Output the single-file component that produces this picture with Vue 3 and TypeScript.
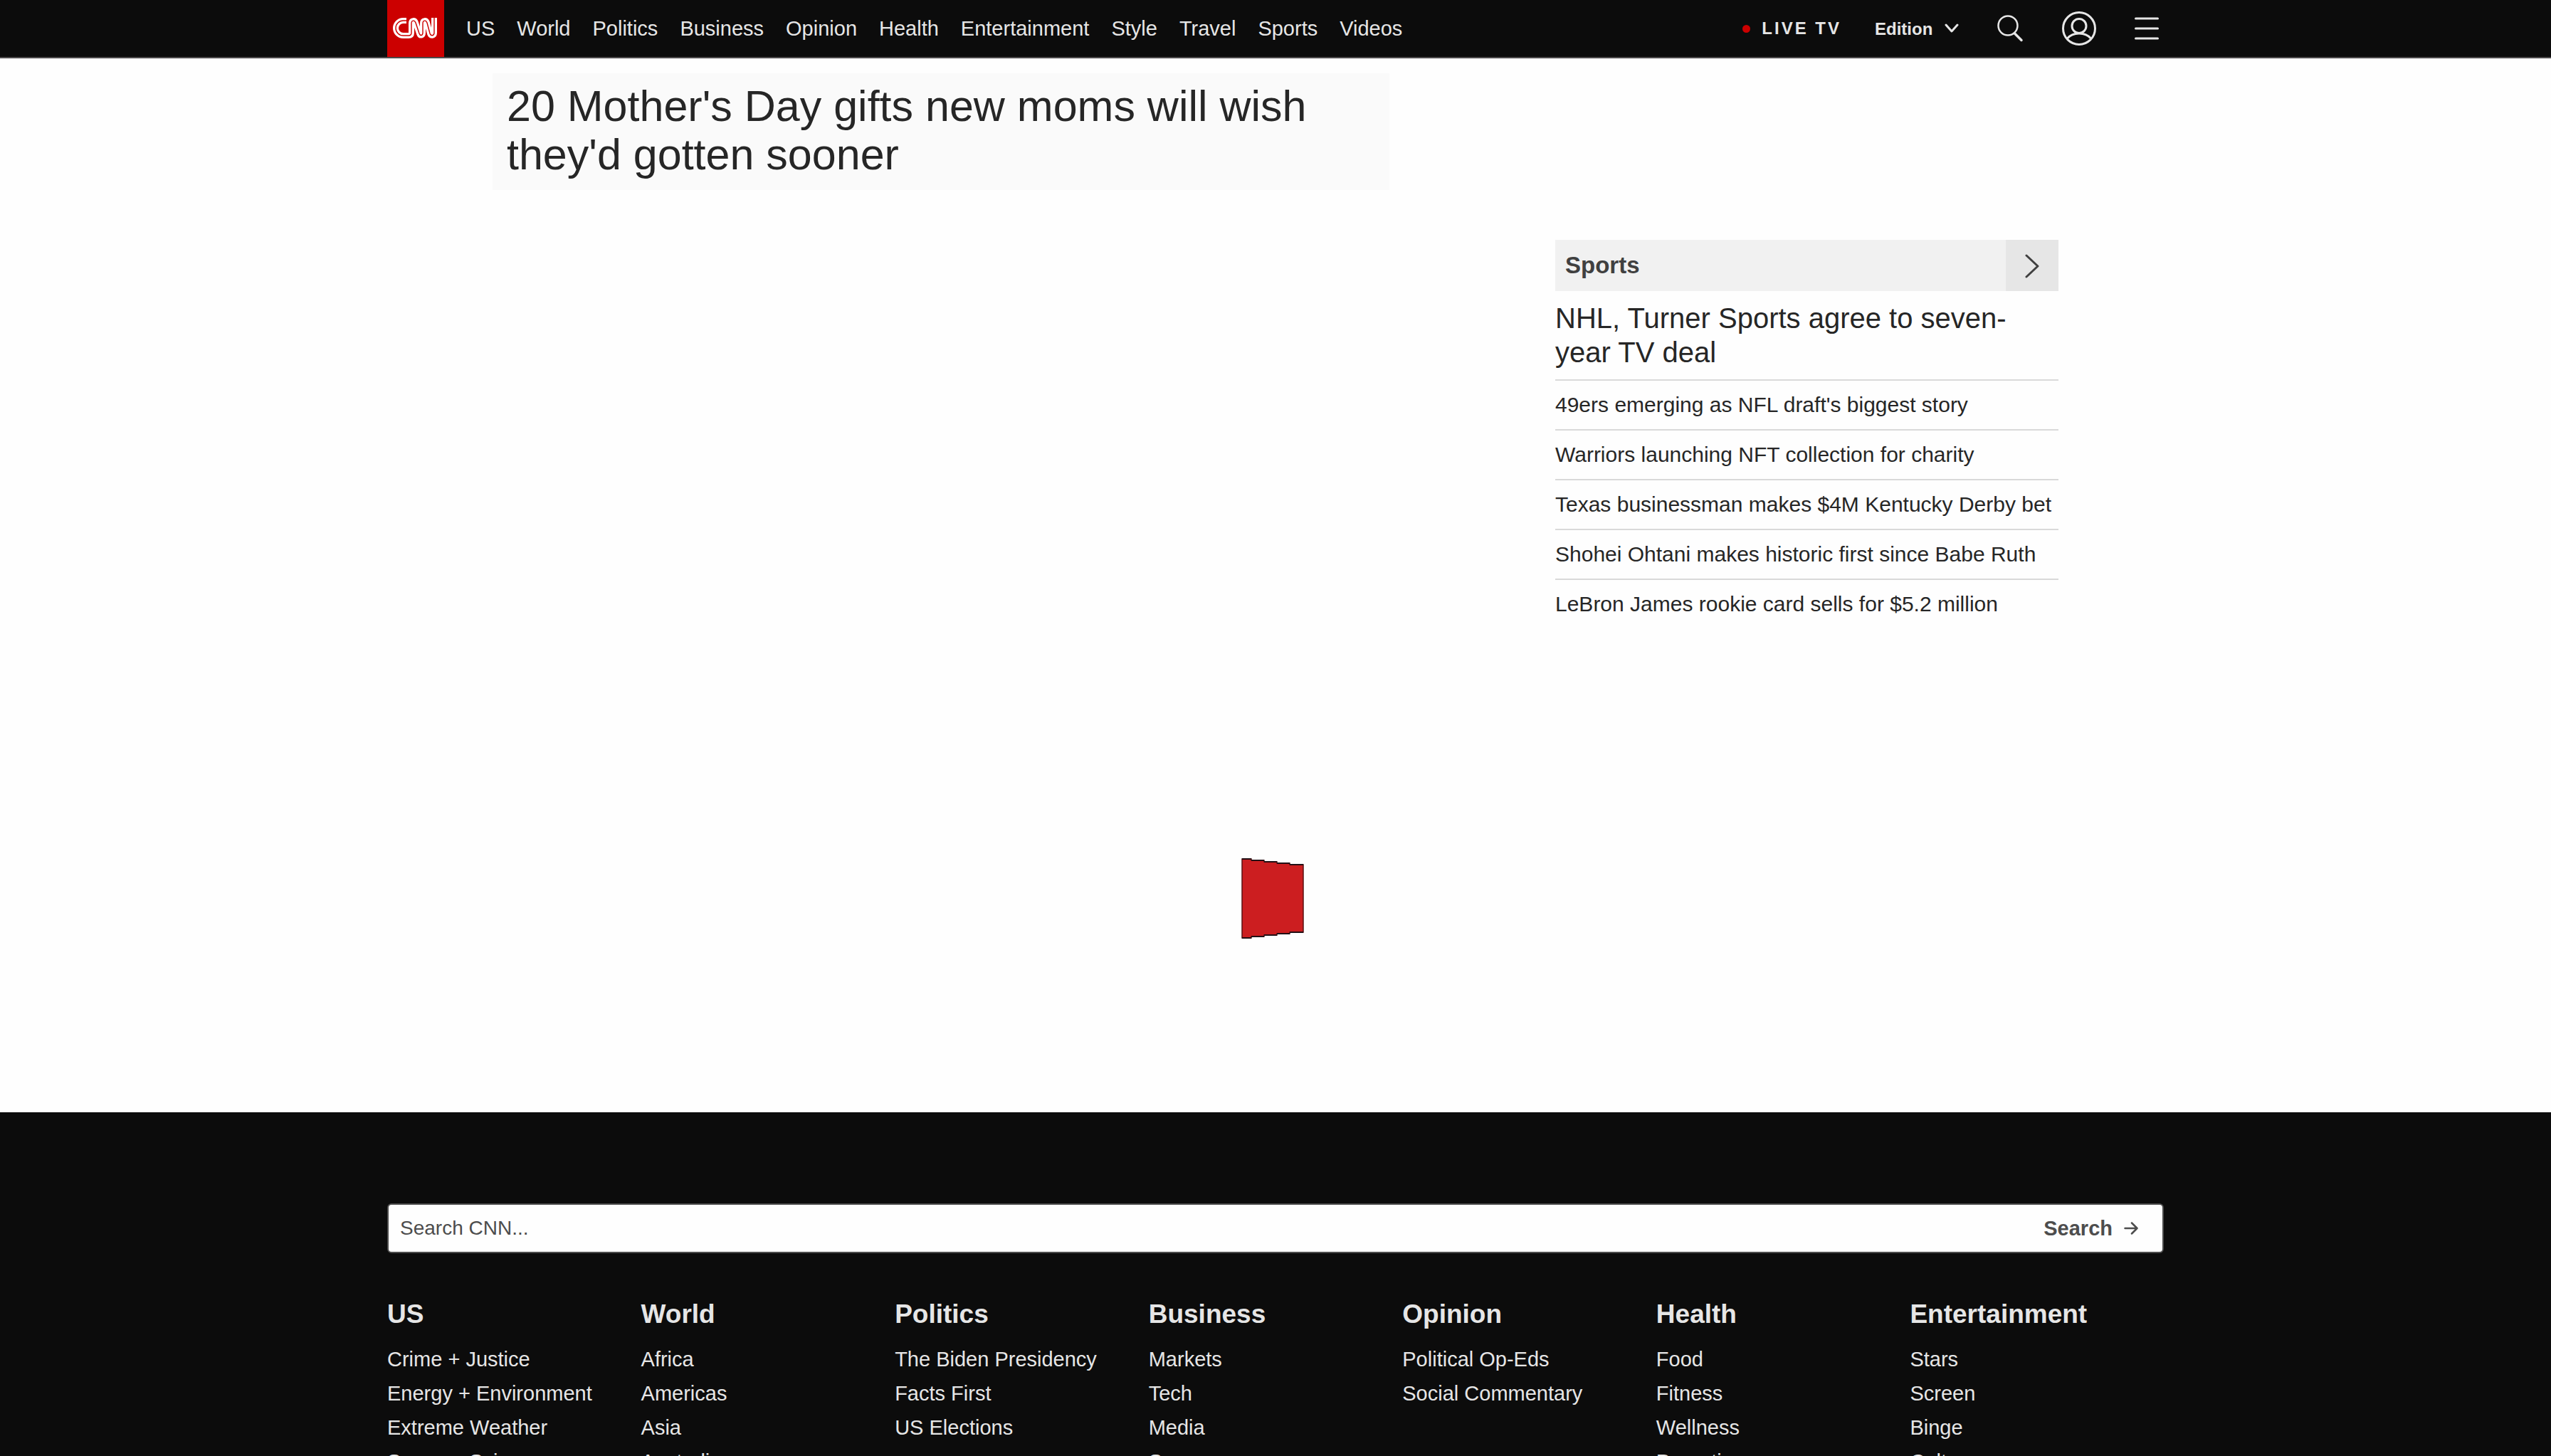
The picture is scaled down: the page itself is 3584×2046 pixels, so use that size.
<script setup lang="ts">
interface FooterColumn {
  title: string
  links: string[]
}

const sections: string[] = [
  'US', 'World', 'Politics', 'Business', 'Opinion', 'Health',
  'Entertainment', 'Style', 'Travel', 'Sports', 'Videos',
]

const sportsStories: string[] = [
  "49ers emerging as NFL draft's biggest story",
  'Warriors launching NFT collection for charity',
  'Texas businessman makes $4M Kentucky Derby bet',
  'Shohei Ohtani makes historic first since Babe Ruth',
  'LeBron James rookie card sells for $5.2 million',
]

const footerColumns: FooterColumn[] = [
  { title: 'US', links: ['Crime + Justice', 'Energy + Environment', 'Extreme Weather', 'Space + Science'] },
  { title: 'World', links: ['Africa', 'Americas', 'Asia', 'Australia'] },
  { title: 'Politics', links: ['The Biden Presidency', 'Facts First', 'US Elections'] },
  { title: 'Business', links: ['Markets', 'Tech', 'Media', 'Success'] },
  { title: 'Opinion', links: ['Political Op-Eds', 'Social Commentary'] },
  { title: 'Health', links: ['Food', 'Fitness', 'Wellness', 'Parenting'] },
  { title: 'Entertainment', links: ['Stars', 'Screen', 'Binge', 'Culture'] },
]
</script>

<template>
  <div class="page">
    <header class="header">
      <div class="header-inner">
        <a class="logo" href="#" aria-label="CNN home">
          <svg viewBox="0 0 80 80" fill="none" stroke-linejoin="round">
            <path stroke="#fff" stroke-width="8" d="M27 29H22.500A10.500 10.500 0 0 0 22.500 50H30Q34 50 34 46V33C34 28 38.500 28 40 32L45 47C46.500 51 50 50 50 46V33C50 28 54.500 28 56 32L60 47C61.500 51 66 50.500 66 46V25" />
            <path stroke="#c00" stroke-width="1.400" d="M27 29H22.500A10.500 10.500 0 0 0 22.500 50H30Q34 50 34 46V33C34 28 38.500 28 40 32L45 47C46.500 51 50 50 50 46V33C50 28 54.500 28 56 32L60 47C61.500 51 66 50.500 66 46V25" />
          </svg>
        </a>
        <nav class="nav" aria-label="Sections">
          <a v-for="s in sections" :key="s" href="#">{{ s }}</a>
        </nav>
        <div class="tools">
          <a class="live" href="#"><span class="dot"></span>LIVE TV</a>
          <label class="edition">
            <select aria-label="Edition">
              <option>Edition</option>
            </select>
            <svg width="20" height="14" viewBox="0 0 20 14" fill="none" stroke="#e6e6e6" stroke-width="3" stroke-linecap="round" stroke-linejoin="round"><path d="M2 2l8 9 8-9" /></svg>
          </label>
          <button type="button" aria-label="Search">
            <svg width="38" height="38" viewBox="0 0 38 38" fill="none" stroke="#e6e6e6"><circle cx="16" cy="15" r="13.500" stroke-width="2.500" /><path d="M25.500 26L35 35.500" stroke-width="3.500" stroke-linecap="round" /></svg>
          </button>
          <button type="button" aria-label="Account">
            <svg width="50" height="50" viewBox="0 0 50 50" fill="none" stroke="#e6e6e6" stroke-width="3"><circle cx="25" cy="25" r="22.500" /><circle cx="25" cy="21.500" r="10" /><path d="M8.500 39C16 29.500 34 29.500 41.500 39" /></svg>
          </button>
          <button type="button" aria-label="Menu">
            <svg width="34" height="34" viewBox="0 0 34 34" fill="none" stroke="#e6e6e6" stroke-width="3" stroke-linecap="round"><path d="M1.500 3h31M1.500 17h31M1.500 31h31" /></svg>
          </button>
        </div>
      </div>
    </header>

    <main class="main">
      <article class="feature">
        <h2><a href="#">20 Mother's Day gifts new moms will wish they'd gotten sooner</a></h2>
      </article>
      <section class="sports">
        <h2 class="sports-head">
          <a href="#">Sports</a>
          <span class="sports-arrow">
            <svg width="20" height="36" viewBox="0 0 20 36" fill="none" stroke="#404040" stroke-width="3" stroke-linecap="round" stroke-linejoin="round"><path d="M2 4l16 15L2 34" /></svg>
          </span>
        </h2>
        <h3><a href="#">NHL, Turner Sports agree to seven-year TV deal</a></h3>
        <ul>
          <li v-for="story in sportsStories" :key="story"><a href="#">{{ story }}</a></li>
        </ul>
      </section>
    </main>

    <div class="loader" role="status" aria-label="Loading">
      <svg width="88" height="113" viewBox="0 0 88 113">
        <path d="M1 1h13v2h18v2h18v2h18v2h19v95H68v2H50v2H32v2H14v2H1z" fill="#cc1e20" stroke="#5a1012" stroke-width="1.500" />
        <path d="M1 1h13M14 3h18M32 5h18M50 7h18M68 9h19M1 112h13M14 110h18M32 108h18M50 106h18M68 104h19" stroke="#221015" stroke-width="2" />
      </svg>
    </div>

    <footer class="footer">
      <div class="footer-inner">
        <form class="search" @submit.prevent>
          <input type="text" placeholder="Search CNN..." aria-label="Search CNN" />
          <button type="submit">
            Search
            <svg width="20" height="18" viewBox="0 0 20 18" fill="none" stroke="#4d4d4d" stroke-width="2.500" stroke-linecap="round" stroke-linejoin="round"><path d="M1.500 9h17M11 1.500L18.500 9 11 16.500" /></svg>
          </button>
        </form>
        <nav class="columns" aria-label="Site map">
          <section v-for="col in footerColumns" :key="col.title">
            <h4><a href="#">{{ col.title }}</a></h4>
            <ul>
              <li v-for="l in col.links" :key="l"><a href="#">{{ l }}</a></li>
            </ul>
          </section>
        </nav>
      </div>
    </footer>
  </div>
</template>

<style>
body {
  margin: 0;
  background: #fefefe;
}
</style>

<style scoped>
.page {
  height: 100vh;
  overflow: hidden;
  font-family: "Liberation Sans", Arial, sans-serif;
  color: #262626;
}
a {
  color: inherit;
  text-decoration: none;
}
ul {
  list-style: none;
  margin: 0;
  padding: 0;
}
h2, h3, h4 {
  margin: 0;
}
svg {
  display: block;
}
button, select, input {
  appearance: none;
  border: 0;
  margin: 0;
  padding: 0;
  background: none;
  font: inherit;
  color: inherit;
}
.header {
  background: #0c0c0c;
  border-bottom: 2px solid #4d4b4c;
  color: #e6e6e6;
}
.header-inner, .footer-inner {
  max-width: 2496px;
  margin: 0 auto;
}
.header-inner {
  display: flex;
  height: 80px;
}
.logo {
  width: 80px;
  background: #c00;
}
.nav {
  display: flex;
  align-items: center;
  gap: 31px;
  margin-left: 31px;
  font-size: 29px;
  line-height: 80px;
}
.tools {
  display: flex;
  align-items: center;
  gap: 53px;
  margin-left: auto;
  padding-right: 7px;
  font-size: 24px;
  font-weight: 700;
}
.live {
  display: flex;
  align-items: center;
  gap: 16px;
  margin-right: -6px;
  letter-spacing: 3px;
  line-height: 84px;
}
.dot {
  width: 11px;
  height: 11px;
  border-radius: 50%;
  background: #c00;
}
.edition {
  display: flex;
  align-items: center;
  gap: 16px;
}
.main {
  display: flex;
  justify-content: space-between;
  align-items: flex-start;
  max-width: 2200px;
  margin: 0 auto;
  padding-top: 21px;
}
.feature {
  box-sizing: border-box;
  width: 1260px;
  padding: 12px 20px 16px;
  background: #fafafa;
}
.feature h2 {
  font-size: 61px;
  font-weight: 400;
  line-height: 68px;
}
.sports {
  width: 707px;
  margin-top: 234px;
}
.sports-head {
  display: flex;
  justify-content: space-between;
  padding-left: 14px;
  background: #f1f1f1;
  color: #404040;
  font-size: 33px;
  line-height: 72px;
}
.sports-arrow {
  display: flex;
  align-items: center;
  justify-content: center;
  width: 74px;
  background: #e6e6e6;
}
.sports h3 {
  padding: 14px 0;
  font-size: 40px;
  font-weight: 400;
  line-height: 48px;
}
.sports li {
  border-top: 2px solid #d9d9d9;
  font-size: 30px;
  line-height: 68px;
}
.loader {
  display: flex;
  justify-content: center;
  padding: 323px 8px 244px 0;
}
.footer {
  padding-top: 128px;
  background: #0c0c0c;
  color: #e6e6e6;
}
.search {
  display: flex;
  height: 66px;
  border: 2px solid #4d4d4d;
  border-radius: 6px;
  background: #fefefe;
  color: #4d4d4d;
  font-size: 29px;
}
.search input {
  flex: 1;
  padding-left: 16px;
  font-size: 28px;
}
.search input::placeholder {
  color: #4d4d4d;
  opacity: 1;
}
.search button {
  display: flex;
  align-items: center;
  gap: 16px;
  padding-right: 34px;
  font-weight: 700;
}
.columns {
  display: grid;
  grid-template-columns: repeat(7, 1fr);
  padding-top: 62px;
}
.columns h4 {
  margin-bottom: 15px;
  font-size: 37px;
  line-height: 48px;
}
.columns li {
  font-size: 29px;
  line-height: 48px;
}
</style>
